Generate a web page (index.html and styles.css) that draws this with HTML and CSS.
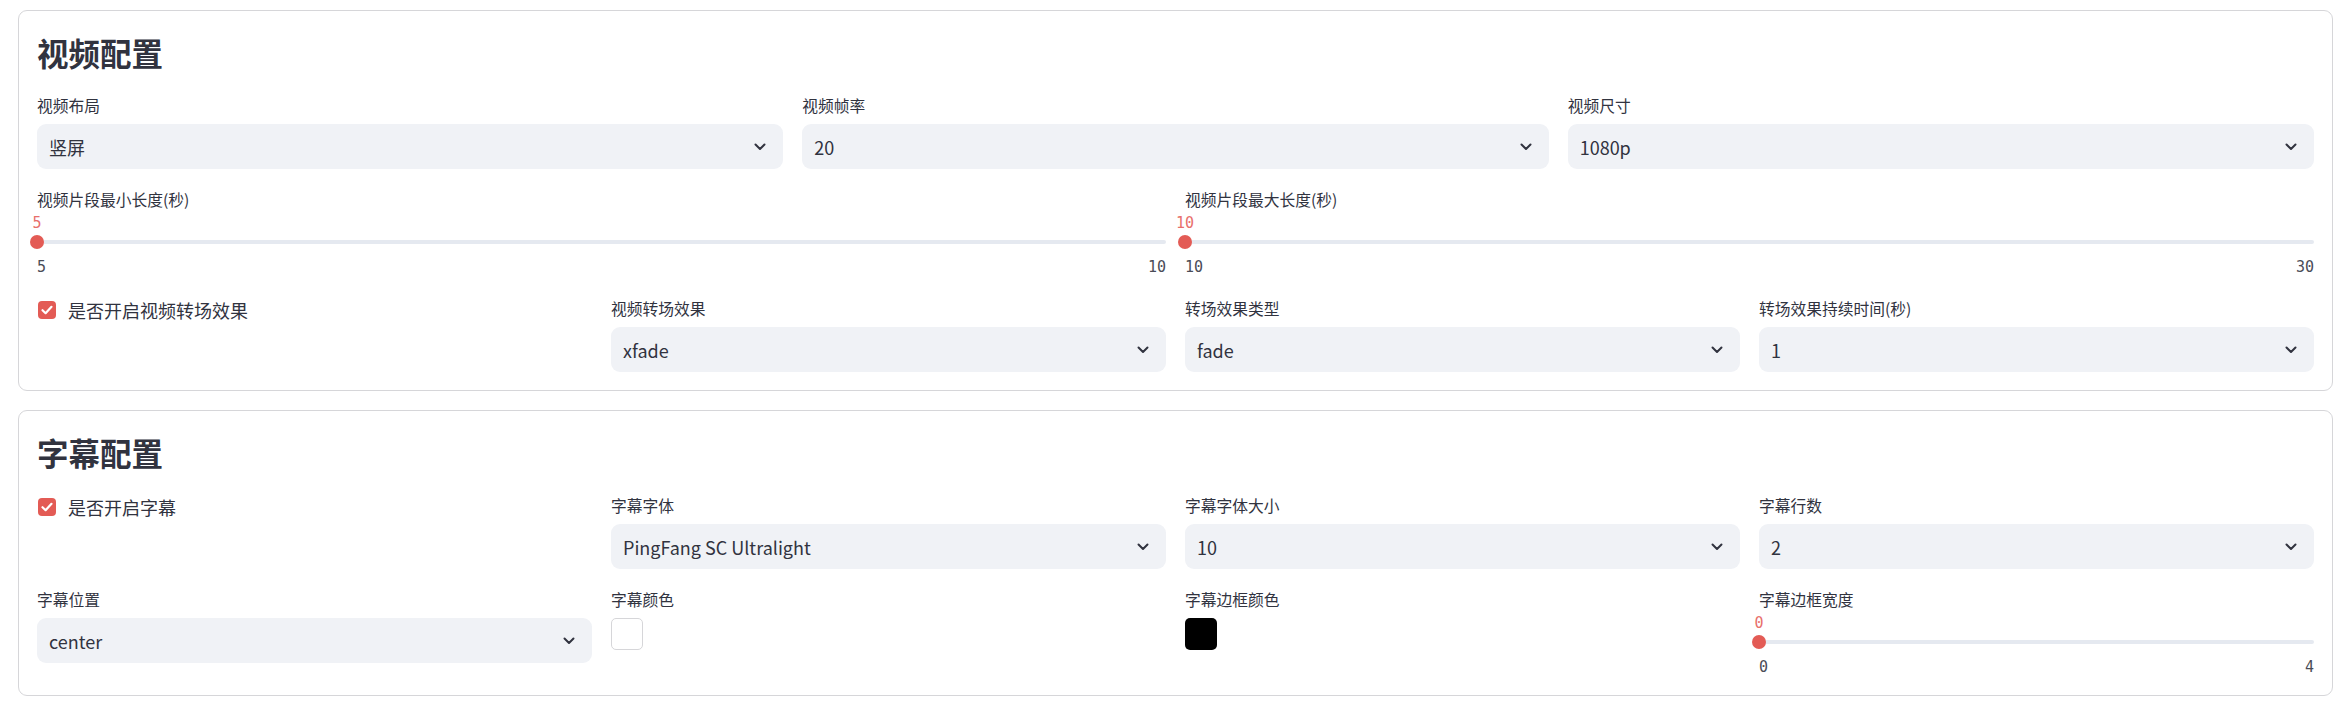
FILE: index.html
```html
<!DOCTYPE html>
<html lang="zh-CN">
<head>
<meta charset="utf-8">
<title>配置</title>
<link rel="stylesheet" href="styles.css">
</head>
<body>
<div class="page">
  <section class="card card-video">
    <h3 class="card-title">视频配置</h3>
    <div class="row cols-3 first-row">
      <div class="field">
        <div class="label">视频布局</div>
        <div class="select"><span class="select-text">竖屏</span><svg class="chev" width="12" height="8" viewBox="0 0 12 8"><polyline points="1.5,1.5 6,6 10.5,1.5" fill="none" stroke="#31333F" stroke-width="2" stroke-linecap="round" stroke-linejoin="round"/></svg></div>
      </div>
      <div class="field">
        <div class="label">视频帧率</div>
        <div class="select"><span class="select-text">20</span><svg class="chev" width="12" height="8" viewBox="0 0 12 8"><polyline points="1.5,1.5 6,6 10.5,1.5" fill="none" stroke="#31333F" stroke-width="2" stroke-linecap="round" stroke-linejoin="round"/></svg></div>
      </div>
      <div class="field">
        <div class="label">视频尺寸</div>
        <div class="select"><span class="select-text">1080p</span><svg class="chev" width="12" height="8" viewBox="0 0 12 8"><polyline points="1.5,1.5 6,6 10.5,1.5" fill="none" stroke="#31333F" stroke-width="2" stroke-linecap="round" stroke-linejoin="round"/></svg></div>
      </div>
    </div>
    <div class="row cols-2 slider-row">
      <div class="slider">
        <div class="label">视频片段最小长度(秒)</div>
        <div class="slider-value"><span class="thumb-value" style="left:0%">5</span></div>
        <div class="slider-track"><div class="track"></div><div class="thumb" style="left:0%"></div></div>
        <div class="ticks"><span>5</span><span>10</span></div>
      </div>
      <div class="slider">
        <div class="label">视频片段最大长度(秒)</div>
        <div class="slider-value"><span class="thumb-value" style="left:0%">10</span></div>
        <div class="slider-track"><div class="track"></div><div class="thumb" style="left:0%"></div></div>
        <div class="ticks"><span>10</span><span>30</span></div>
      </div>
    </div>
    <div class="row cols-4 after-slider">
      <div class="field">
        <label class="checkbox"><span class="box"><svg width="18" height="18" viewBox="0 0 18 18"><polyline points="4.5,9.2 7.6,12.2 13.5,5.8" fill="none" stroke="#fff" stroke-width="2.2" stroke-linecap="round" stroke-linejoin="round"/></svg></span><span class="check-text">是否开启视频转场效果</span></label>
      </div>
      <div class="field">
        <div class="label">视频转场效果</div>
        <div class="select"><span class="select-text">xfade</span><svg class="chev" width="12" height="8" viewBox="0 0 12 8"><polyline points="1.5,1.5 6,6 10.5,1.5" fill="none" stroke="#31333F" stroke-width="2" stroke-linecap="round" stroke-linejoin="round"/></svg></div>
      </div>
      <div class="field">
        <div class="label">转场效果类型</div>
        <div class="select"><span class="select-text">fade</span><svg class="chev" width="12" height="8" viewBox="0 0 12 8"><polyline points="1.5,1.5 6,6 10.5,1.5" fill="none" stroke="#31333F" stroke-width="2" stroke-linecap="round" stroke-linejoin="round"/></svg></div>
      </div>
      <div class="field">
        <div class="label">转场效果持续时间(秒)</div>
        <div class="select"><span class="select-text">1</span><svg class="chev" width="12" height="8" viewBox="0 0 12 8"><polyline points="1.5,1.5 6,6 10.5,1.5" fill="none" stroke="#31333F" stroke-width="2" stroke-linecap="round" stroke-linejoin="round"/></svg></div>
      </div>
    </div>
  </section>

  <section class="card card-subtitle">
    <h3 class="card-title">字幕配置</h3>
    <div class="row cols-4 first-row">
      <div class="field">
        <label class="checkbox"><span class="box"><svg width="18" height="18" viewBox="0 0 18 18"><polyline points="4.5,9.2 7.6,12.2 13.5,5.8" fill="none" stroke="#fff" stroke-width="2.2" stroke-linecap="round" stroke-linejoin="round"/></svg></span><span class="check-text">是否开启字幕</span></label>
      </div>
      <div class="field">
        <div class="label">字幕字体</div>
        <div class="select"><span class="select-text">PingFang SC Ultralight</span><svg class="chev" width="12" height="8" viewBox="0 0 12 8"><polyline points="1.5,1.5 6,6 10.5,1.5" fill="none" stroke="#31333F" stroke-width="2" stroke-linecap="round" stroke-linejoin="round"/></svg></div>
      </div>
      <div class="field">
        <div class="label">字幕字体大小</div>
        <div class="select"><span class="select-text">10</span><svg class="chev" width="12" height="8" viewBox="0 0 12 8"><polyline points="1.5,1.5 6,6 10.5,1.5" fill="none" stroke="#31333F" stroke-width="2" stroke-linecap="round" stroke-linejoin="round"/></svg></div>
      </div>
      <div class="field">
        <div class="label">字幕行数</div>
        <div class="select"><span class="select-text">2</span><svg class="chev" width="12" height="8" viewBox="0 0 12 8"><polyline points="1.5,1.5 6,6 10.5,1.5" fill="none" stroke="#31333F" stroke-width="2" stroke-linecap="round" stroke-linejoin="round"/></svg></div>
      </div>
    </div>
    <div class="row cols-4 second-row">
      <div class="field">
        <div class="label">字幕位置</div>
        <div class="select"><span class="select-text">center</span><svg class="chev" width="12" height="8" viewBox="0 0 12 8"><polyline points="1.5,1.5 6,6 10.5,1.5" fill="none" stroke="#31333F" stroke-width="2" stroke-linecap="round" stroke-linejoin="round"/></svg></div>
      </div>
      <div class="field">
        <div class="label">字幕颜色</div>
        <div class="swatch swatch-white"></div>
      </div>
      <div class="field">
        <div class="label">字幕边框颜色</div>
        <div class="swatch swatch-black"></div>
      </div>
      <div class="slider">
        <div class="label">字幕边框宽度</div>
        <div class="slider-value"><span class="thumb-value" style="left:0%">0</span></div>
        <div class="slider-track"><div class="track"></div><div class="thumb" style="left:0%"></div></div>
        <div class="ticks"><span>0</span><span>4</span></div>
      </div>
    </div>
  </section>
</div>
</body>
</html>
```

FILE: styles.css
```css
* {
  box-sizing: border-box;
}

html, body {
  margin: 0;
  padding: 0;
  background: #ffffff;
}

body {
  font-family: "Noto Sans CJK SC", "Noto Sans", sans-serif;
  color: #31333F;
}

.page {
  padding: 10px 7px 0 18px;
  display: flex;
  flex-direction: column;
  gap: 19px;
}

.card {
  border: 1px solid #d6d6d9;
  border-radius: 9px;
  padding: 18px;
  display: flex;
  flex-direction: column;
}

.card-title {
  margin: 4px 0 0 0;
  font-size: 31.5px;
  line-height: 38px;
  height: 38px;
  font-weight: 700;
  color: #31333F;
}

.row {
  display: grid;
  column-gap: 19px;
}

.cols-2 { grid-template-columns: repeat(2, 1fr); }
.cols-3 { grid-template-columns: repeat(3, 1fr); }
.cols-4 { grid-template-columns: repeat(4, 1fr); }

.first-row { margin-top: 24px; }
.slider-row { margin-top: 20px; }
.after-slider { margin-top: 21px; }
.second-row { margin-top: 20px; }

.field {
  display: flex;
  flex-direction: column;
  min-width: 0;
}

.label {
  font-size: 15.75px;
  line-height: 22px;
  height: 22px;
  white-space: nowrap;
  color: #31333F;
}

.field .label {
  margin-bottom: 7px;
}

.select {
  height: 45px;
  background: #F0F2F6;
  border-radius: 9px;
  display: flex;
  align-items: center;
  justify-content: space-between;
  padding: 0 17px 0 12px;
}

.select-text {
  font-size: 18px;
  line-height: 24px;
  color: #31333F;
  white-space: nowrap;
}

.chev {
  display: block;
  flex: none;
}

.checkbox {
  display: flex;
  align-items: center;
  height: 22px;
  padding-left: 1px;
  margin-top: 1px;
}

.box {
  width: 18px;
  height: 18px;
  border-radius: 4px;
  background: #E35B55;
  display: flex;
  flex: none;
}

.box svg {
  display: block;
}

.check-text {
  margin-left: 12px;
  font-size: 18px;
  line-height: 22px;
  white-space: nowrap;
  color: #31333F;
}

.slider {
  display: flex;
  flex-direction: column;
  min-width: 0;
}

.slider-value {
  position: relative;
  height: 20px;
  margin-top: 2px;
}

.thumb-value {
  position: absolute;
  top: 0;
  transform: translateX(-50%);
  font-family: "DejaVu Sans Mono", "Liberation Mono", monospace;
  font-size: 15px;
  line-height: 20px;
  color: #E8706B;
}

.slider-track {
  position: relative;
  height: 18px;
  display: flex;
  align-items: center;
}

.track {
  flex: 1;
  height: 4px;
  border-radius: 2px;
  background: #E5E9F0;
}

.thumb {
  position: absolute;
  top: 2px;
  width: 14px;
  height: 14px;
  margin-left: -7px;
  border-radius: 50%;
  background: #E35B55;
}

.ticks {
  margin-top: 6px;
  height: 20px;
  display: flex;
  justify-content: space-between;
  font-family: "DejaVu Sans Mono", "Liberation Mono", monospace;
  font-size: 15px;
  line-height: 20px;
  color: #4a4c57;
}

.swatch {
  width: 32px;
  height: 32px;
  border-radius: 5px;
}

.swatch-white {
  background: #ffffff;
  border: 1px solid #d6d6d9;
}

.swatch-black {
  background: #000000;
}
```
